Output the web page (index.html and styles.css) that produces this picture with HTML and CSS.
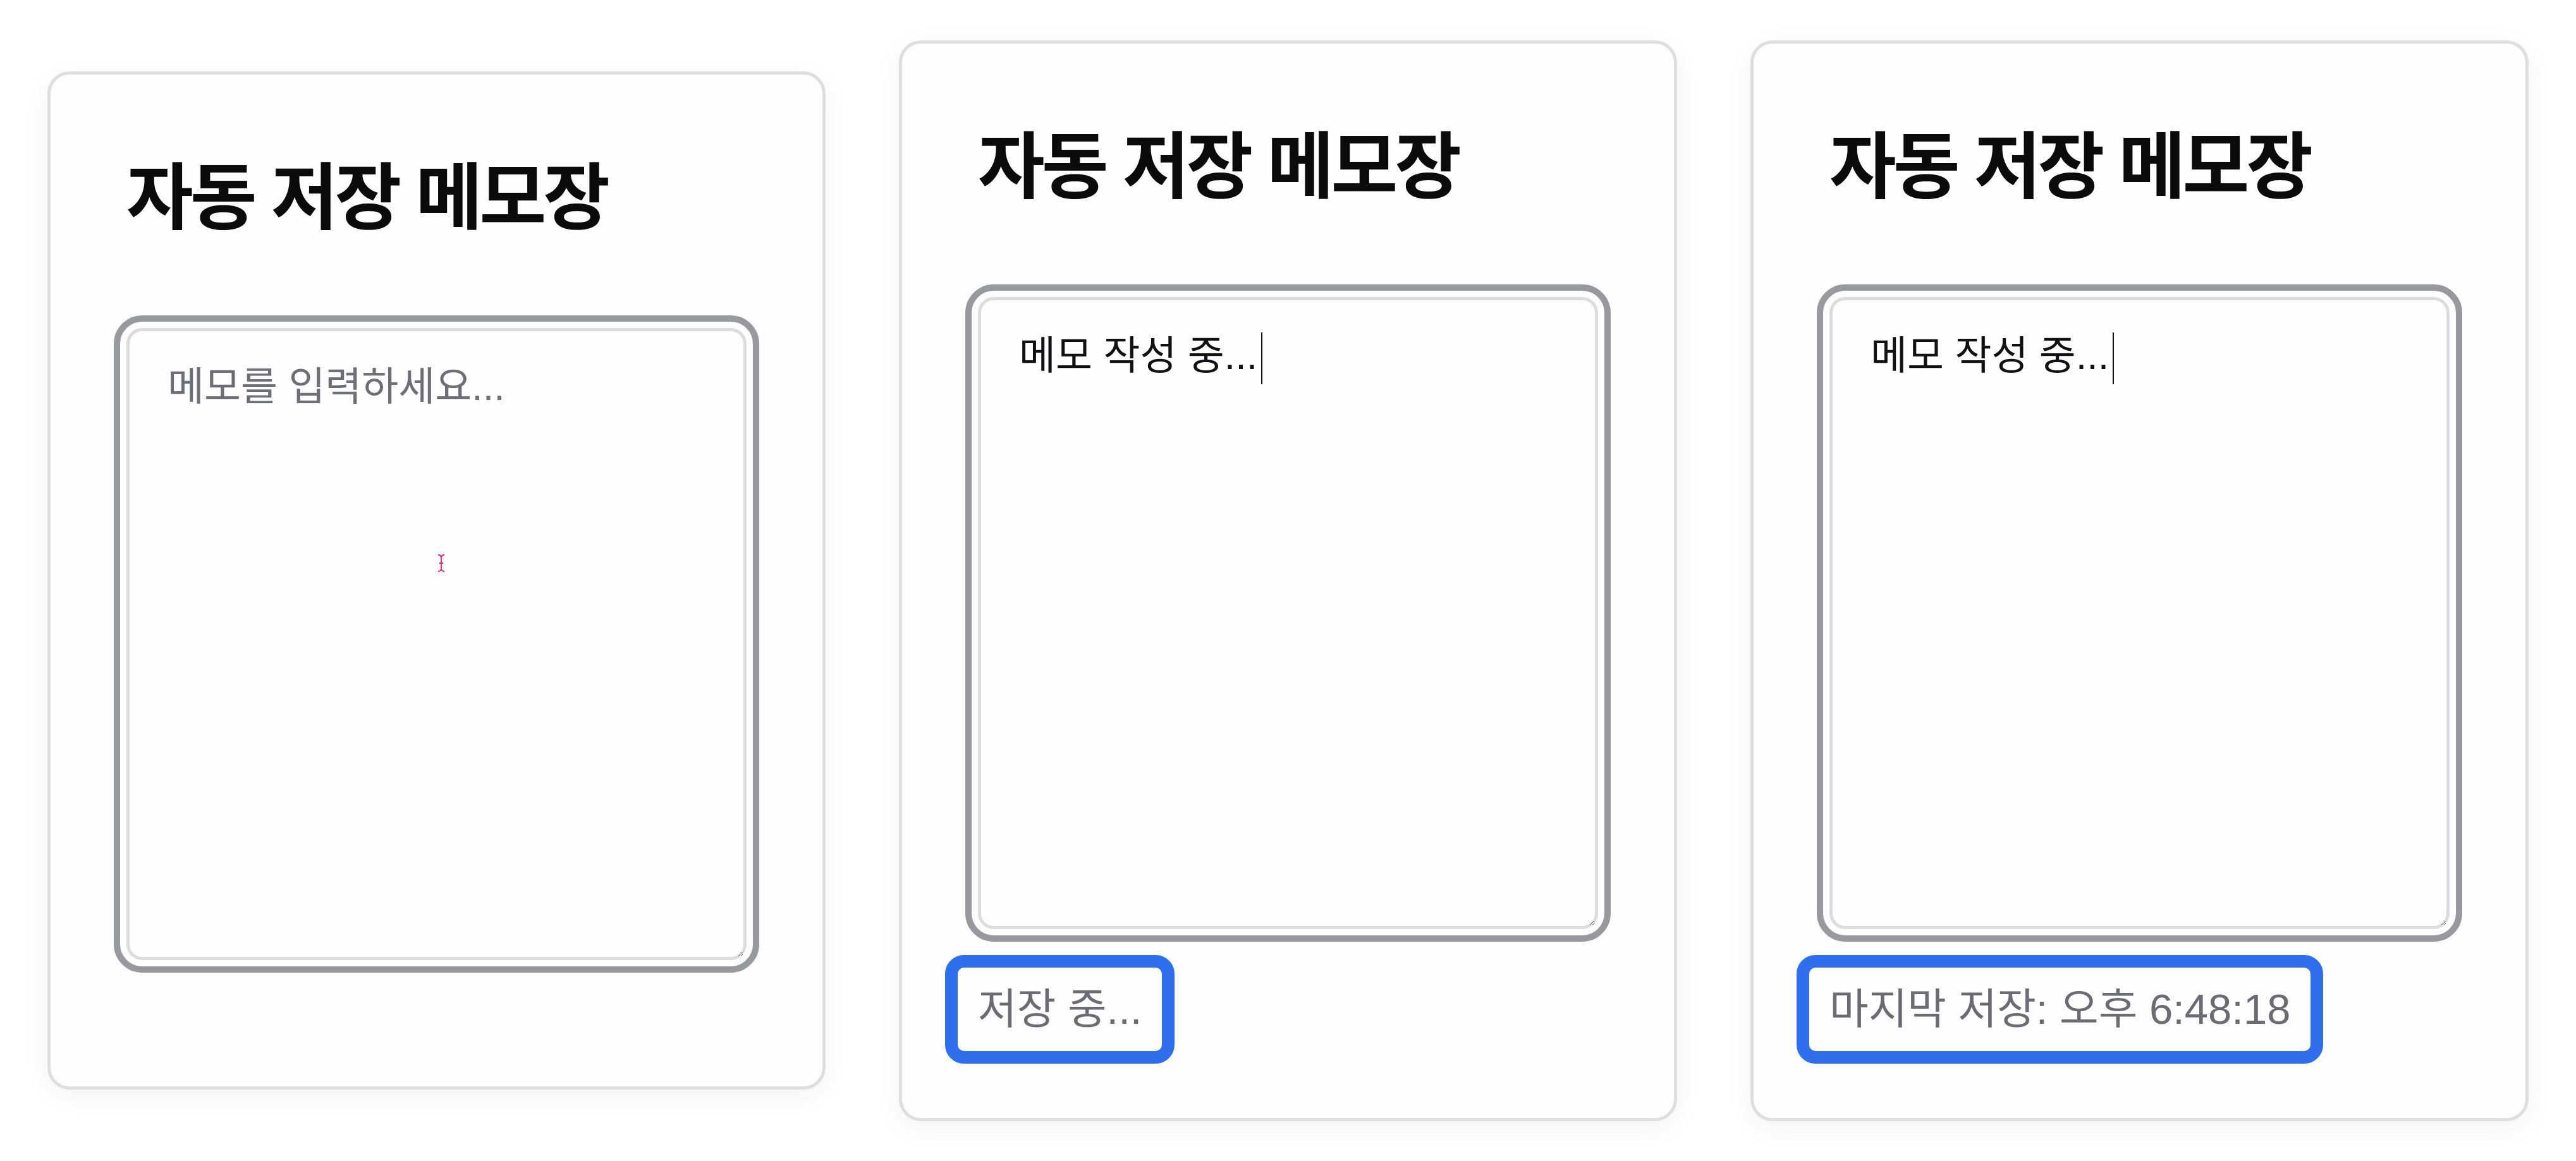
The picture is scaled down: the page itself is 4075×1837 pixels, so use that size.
FILE: index.html
```html
<!DOCTYPE html>
<html lang="ko">
<head>
  <meta charset="UTF-8">
  <title>자동 저장 메모장</title>
  <link rel="stylesheet" href="styles.css">
</head>

<body>

  <div class="card card-idle">
    <h1>자동 저장 메모장</h1>
    <div class="field">
      <textarea class="memo" placeholder="메모를 입력하세요..."></textarea>
      <svg class="pointer" width="14" height="30" viewBox="0 0 14 30">
        <path d="M2 2 C5 2 6 3 7 5 C8 3 9 2 12 2 M7 5 V25 M2 28 C5 28 6 27 7 25 C8 27 9 28 12 28 M4 15 H10" fill="none" stroke="#ffffff" stroke-width="4"/>
        <path d="M2 2 C5 2 6 3 7 5 C8 3 9 2 12 2 M7 5 V25 M2 28 C5 28 6 27 7 25 C8 27 9 28 12 28 M4 15 H10" fill="none" stroke="#e0207a" stroke-width="1.8"/>
      </svg>
    </div>
  </div>

  <div class="card">
    <h1>자동 저장 메모장</h1>
    <div class="field">
      <textarea class="memo">메모 작성 중...</textarea>
      <span class="caret"></span>
    </div>
    <div class="status">저장 중...</div>
  </div>

  <div class="card">
    <h1>자동 저장 메모장</h1>
    <div class="field">
      <textarea class="memo">메모 작성 중...</textarea>
      <span class="caret"></span>
    </div>
    <div class="status">마지막 저장: 오후 6:48:18</div>
  </div>

</body>
</html>
```

FILE: styles.css
```css
body {
  margin: 0;
  height: 100vh;
  background: #ffffff;
  font-family: "Liberation Sans", "Noto Sans CJK KR", sans-serif;
  display: flex;
  align-items: center;
  justify-content: center;
  gap: 116px;
}
.card {
  box-sizing: border-box;
  width: 1231px;
  padding: 120px 120px 86px;
  background: #fdfdfd;
  border: 5px solid #dedee2;
  border-radius: 35px;
  box-shadow: 0 10px 40px rgba(0, 0, 0, 0.05);
}
.card-idle {
  padding-bottom: 200px;
}
h1 {
  margin: 0 0 151px;
  font-family: "Noto Sans CJK KR", sans-serif;
  font-size: 115px;
  line-height: 130px;
  font-weight: 700;
  letter-spacing: -5px;
  color: #0b0b0c;
}
.field {
  position: relative;
}
.memo {
  display: block;
  box-sizing: border-box;
  width: 100%;
  height: 1000px;
  margin: 0;
  padding: 40px 60px;
  font-family: inherit;
  font-size: 63px;
  line-height: 1.5;
  color: #111113;
  background: #fdfdfd;
  border: 5px solid #dcdce0;
  border-radius: 25px;
  outline: 10px solid #98989f;
  outline-offset: 10px;
}
.memo::placeholder {
  color: #6e6e76;
}
.caret {
  position: absolute;
  left: 448px;
  top: 56px;
  width: 2px;
  height: 82px;
  background: #111;
}
.pointer {
  position: absolute;
  left: 491px;
  top: 357px;
}
.status {
  display: inline-block;
  margin: 41px 0 0 -52px;
  padding: 32px;
  font-size: 67px;
  line-height: 68px;
  color: #6b6b73;
  background: #fdfdfd;
  border: 20px solid #2f6fee;
  border-radius: 30px;
}
```
